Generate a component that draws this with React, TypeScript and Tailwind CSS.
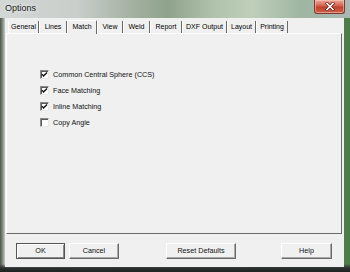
import React from "react";

const tabs: { label: string; w: number; sel?: boolean }[] = [
  { label: "General", w: 31 },
  { label: "Lines", w: 28 },
  { label: "Match", w: 30, sel: true },
  { label: "View", w: 26 },
  { label: "Weld", w: 27 },
  { label: "Report", w: 32 },
  { label: "DXF Output", w: 45 },
  { label: "Layout", w: 29 },
  { label: "Printing", w: 32 },
];

const options = [
  { label: "Common Central Sphere (CCS)", checked: true },
  { label: "Face Matching", checked: true },
  { label: "Inline Matching", checked: true },
  { label: "Copy Angle", checked: false },
];

function Check({ checked }: { checked: boolean }) {
  return (
    <div className="w-[9px] h-[9px] bg-white border border-t-[#8a8a8a] border-l-[#8a8a8a] border-r-[#e8e8e8] border-b-[#e8e8e8] shadow-[inset_1px_1px_0_#5a5a5a] flex items-center justify-center">
      {checked && (
        <svg width="7" height="7" viewBox="0 0 7 7">
          <polyline points="1,3.2 2.6,5 6,1.4" fill="none" stroke="#111" strokeWidth="1.4" />
        </svg>
      )}
    </div>
  );
}

function Btn({ label, w, def, cls }: { label: string; w: number; def?: boolean; cls: string }) {
  return (
    <div
      className={`h-[16px] flex items-center justify-center bg-[#f0f0f0] text-[7.2px] text-[#111] ${cls} ${
        def
          ? "border border-[#555] shadow-[inset_1px_1px_0_#fff,inset_-1px_-1px_0_#8a8a8a]"
          : "border border-t-white border-l-white border-r-[#6a6a6a] border-b-[#6a6a6a] shadow-[inset_-1px_-1px_0_#a8a8a8]"
      }`}
      style={{ width: w }}
    >
      {label}
    </div>
  );
}

export default function App() {
  return (
    <div className="w-[350px] h-[272px] overflow-hidden flex flex-col [font-family:'Liberation_Sans',Arial,sans-serif] bg-[linear-gradient(180deg,transparent_0px,transparent_264px,#2c302e_268px,#1e2220_272px),linear-gradient(90deg,#4d5548_0px,#8c948a_3px,#c9cdc8_5px,#6f8a66_50%,#4d7c49_100%)]">
      <div className="h-[18px] flex items-start bg-[linear-gradient(90deg,#d3d7d6_0%,#c9cecb_22%,#a3b1a0_38%,#8fa38b_48%,#aebfaa_60%,#bfcfba_72%,#9fb6a2_86%,#a9b9b3_100%)]">
        <span className="pl-[5px] pt-[3px] text-[9px] leading-[11px] text-[#1b1b1b] [text-shadow:0_0_4px_#fff]">
          Options
        </span>
        <div className="ml-auto mr-[5px] w-[31px] h-[14px] rounded-b-[3px] border border-t-0 border-[#7a3a30] bg-[linear-gradient(180deg,#eaa89a_0%,#d86a55_40%,#c0412c_55%,#d0604a_100%)] shadow-[inset_0_0_0_1px_rgba(255,210,200,0.5)] flex items-center justify-center">
          <svg width="10" height="9" viewBox="0 0 10 9">
            <path d="M2 1.5 L8 7.5 M8 1.5 L2 7.5" stroke="#5a1a12" strokeWidth="3" strokeLinecap="square" />
            <path d="M2 1.5 L8 7.5 M8 1.5 L2 7.5" stroke="#ffffff" strokeWidth="1.6" strokeLinecap="square" />
          </svg>
        </div>
      </div>
      <div className="flex-1 ml-[5px] mr-[6px] mb-[5px] bg-[#f0f0f0] flex flex-col">
        <div className="flex items-end pl-[3px] pt-[2px] h-[16px] relative z-10 -mb-[1px]">
          {tabs.map((t) =>
            t.sel ? (
              <div
                key={t.label}
                className="h-[14px] flex items-start justify-center pt-[1px] bg-[#f0f0f0] border-t border-l border-t-white border-l-white border-r border-r-[#6a6a6a] text-[7px] leading-[10px] text-black rounded-t-[1px]"
                style={{ width: t.w }}
              >
                {t.label}
              </div>
            ) : (
              <div
                key={t.label}
                className="h-[12px] mb-[1px] flex items-center justify-center bg-[#f0f0f0] border-l border-l-white border-r border-r-[#6a6a6a] text-[7px] leading-[10px] text-black"
                style={{ width: t.w }}
              >
                {t.label}
              </div>
            )
          )}
        </div>
        <div className="ml-[1px] mr-[2px] h-[201px] border border-t-white border-l-white border-r-[#6a6a6a] border-b-[#6a6a6a] flex flex-col pt-[36px] pl-[33px]">
          {options.map((o) => (
            <div key={o.label} className="h-[16px] flex items-start gap-[4px]">
              <Check checked={o.checked} />
              <span className="text-[7.2px] leading-[9px] text-[#111]">{o.label}</span>
            </div>
          ))}
        </div>
        <div className="flex mt-[9px] pl-[11px]">
          <Btn label="OK" w={49} def cls="" />
          <Btn label="Cancel" w={50} cls="ml-[4px]" />
          <Btn label="Reset Defaults" w={70} cls="ml-[47px]" />
          <Btn label="Help" w={51} cls="ml-[45px]" />
        </div>
      </div>
    </div>
  );
}
